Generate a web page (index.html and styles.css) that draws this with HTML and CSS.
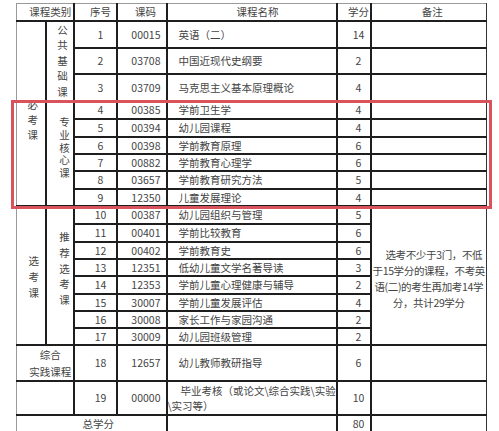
FILE: index.html
```html
<!DOCTYPE html>
<html lang="zh-CN">
<head>
<meta charset="utf-8">
<title>课程设置</title>
<link rel="stylesheet" href="styles.css">
</head>
<body>
<div class="sheet">
  <table class="plan">
    <colgroup>
      <col class="w-cat"><col class="w-sub"><col class="w-no"><col class="w-code"><col class="w-name"><col class="w-cr"><col class="w-note">
    </colgroup>
    <thead>
      <tr class="h17">
        <th colspan="2" class="head cat-h el">课程类别</th>
        <th class="head no">序号</th>
        <th class="head code-h">课码</th>
        <th class="head name-h">课程名称</th>
        <th class="head cr">学分</th>
        <th class="head note-h er">备注</th>
      </tr>
    </thead>
    <tbody>
      <tr class="h27">
        <td rowspan="9" class="el cat"><span class="vt vt-bk">必考课</span></td>
        <td rowspan="3" class="sub"><span class="vt vt-gg">公共基础课</span></td>
        <td class="no">1</td><td class="code">00015</td><td class="name">英语（二）</td><td class="cr">14</td><td class="er"></td>
      </tr>
      <tr class="h26"><td class="no">2</td><td class="code">03708</td><td class="name">中国近现代史纲要</td><td class="cr">2</td><td class="er"></td></tr>
      <tr class="h27"><td class="no">3</td><td class="code">03709</td><td class="name">马克思主义基本原理概论</td><td class="cr">4</td><td class="er"></td></tr>
      <tr class="h18">
        <td rowspan="6" class="sub sub-zy"><span class="vt vt-zy">专业核心课</span></td>
        <td class="no">4</td><td class="code">00385</td><td class="name">学前卫生学</td><td class="cr">4</td><td class="er"></td>
      </tr>
      <tr class="h18"><td class="no">5</td><td class="code">00394</td><td class="name">幼儿园课程</td><td class="cr">4</td><td class="er"></td></tr>
      <tr class="h17"><td class="no">6</td><td class="code">00398</td><td class="name">学前教育原理</td><td class="cr">6</td><td class="er"></td></tr>
      <tr class="h17"><td class="no">7</td><td class="code">00882</td><td class="name">学前教育心理学</td><td class="cr">6</td><td class="er"></td></tr>
      <tr class="h18"><td class="no">8</td><td class="code">03657</td><td class="name">学前教育研究方法</td><td class="cr">5</td><td class="er"></td></tr>
      <tr class="h17"><td class="no">9</td><td class="code">12350</td><td class="name">儿童发展理论</td><td class="cr">4</td><td class="er"></td></tr>
      <tr class="h18">
        <td rowspan="8" class="el cat cat-xk"><span class="vt vt-xk">选考课</span></td>
        <td rowspan="8" class="sub sub-tj"><span class="vt vt-tj">推荐选考课</span></td>
        <td class="no">10</td><td class="code">00387</td><td class="name">幼儿园组织与管理</td><td class="cr">5</td>
        <td rowspan="8" class="er note">　选考不少于3门，不低<br>于15学分的课程，不考英<br>语(二)的考生再加考14学<br>分，共计29学分</td>
      </tr>
      <tr class="h18"><td class="no">11</td><td class="code">00401</td><td class="name">学前比较教育</td><td class="cr">6</td></tr>
      <tr class="h17"><td class="no">12</td><td class="code">00402</td><td class="name">学前教育史</td><td class="cr">6</td></tr>
      <tr class="h17"><td class="no">13</td><td class="code">12351</td><td class="name">低幼儿童文学名著导读</td><td class="cr">3</td></tr>
      <tr class="h18"><td class="no">14</td><td class="code">12353</td><td class="name">学前儿童心理健康与辅导</td><td class="cr">2</td></tr>
      <tr class="h17"><td class="no">15</td><td class="code">30007</td><td class="name">学前儿童发展评估</td><td class="cr">4</td></tr>
      <tr class="h17"><td class="no">16</td><td class="code">30008</td><td class="name">家长工作与家园沟通</td><td class="cr">2</td></tr>
      <tr class="h17"><td class="no">17</td><td class="code">30009</td><td class="name">幼儿园班级管理</td><td class="cr">2</td></tr>
      <tr class="h34">
        <td colspan="2" class="el prac">综合<br>实践课程</td>
        <td class="no">18</td><td class="code">12657</td><td class="name">幼儿教师教研指导</td><td class="cr">6</td><td class="er"></td>
      </tr>
      <tr class="h34">
        <td colspan="2" class="el"></td>
        <td class="no">19</td><td class="code">00000</td><td class="name name-wrap">毕业考核（或论文\综合实践\实验<br>\实习等）</td><td class="cr">10</td><td class="er"></td>
      </tr>
      <tr class="h17 total">
        <td colspan="4" class="el sum">总学分</td>
        <td></td>
        <td class="cr">80</td>
        <td class="er"></td>
      </tr>
    </tbody>
  </table>
  <div class="highlight"></div>
</div>
</body>
</html>
```

FILE: styles.css
```css
* { box-sizing: border-box; }
html, body { margin: 0; padding: 0; background: #fff; }
body {
  font-family: "Noto Sans CJK SC", "Noto Sans", sans-serif;
  font-size: 10.5px;
  color: #444;
}
.sheet {
  position: relative;
  width: 470px;
  margin: 3px 0 0 16px;
}
.plan {
  border-collapse: collapse;
  table-layout: fixed;
  width: 470px;
}
.w-cat { width: 29px; }
.w-sub { width: 28px; }
.w-no { width: 43px; }
.w-code { width: 50px; }
.w-name { width: 170px; }
.w-cr { width: 34px; }
.w-note { width: 116px; }

.plan th, .plan td {
  border: 2px solid #1e1e1e;
  padding: 0;
  line-height: 13px;
  font-weight: normal;
  text-align: center;
  vertical-align: middle;
  white-space: nowrap;
}
.plan th { border-top: 1px solid #9a9a9a; }
.plan .el { border-left: 1px solid #9a9a9a; }
.plan .er { border-right: 1px solid #333; }
.plan .total td { border-bottom: 2px solid #8a8a8a; }

.h17 { height: 17px; }
.h18 { height: 18px; }
.h26 { height: 26px; }
.h27 { height: 27px; }
.h34 { height: 34px; }

.plan .cat-h { padding-left: 11px; }
.plan .no { padding-left: 11px; }
.plan .code { text-align: right; padding-right: 5px; }
.plan .code-h { padding-left: 8px; }
.plan .name { text-align: left; padding-left: 11px; }
.plan .name-h { padding-left: 12px; }
.plan .cr { padding-left: 10px; }
.plan .note-h { padding-left: 7px; }

.vt {
  display: inline-block;
  width: 1em;
  white-space: normal;
  word-break: break-all;
}
.plan .cat { padding-left: 4px; }
.plan .cat-xk { padding-left: 6px; }
.vt-bk { line-height: 15px; padding-top: 12px; }
.vt-xk { line-height: 16px; padding-top: 3px; }
.plan .sub { padding-left: 6px; }
.plan .sub-zy, .plan .sub-tj { padding-left: 10px; }
.vt-gg { line-height: 15.5px; }
.vt-zy { line-height: 12.7px; padding-bottom: 10px; }
.vt-tj { line-height: 15.8px; padding-bottom: 13px; }

.plan .note { line-height: 16px; letter-spacing: -0.35px; padding-top: 8px; }
.plan .prac { line-height: 17px; padding-left: 11px; }
.plan .name-wrap { padding-left: 0; text-indent: 13px; line-height: 15px; }
.plan .sum { padding-left: 14px; }

.highlight {
  position: absolute;
  left: -5px;
  top: 97px;
  width: 481px;
  height: 109px;
  border: 3px solid #d9535c;
  pointer-events: none;
}
```
